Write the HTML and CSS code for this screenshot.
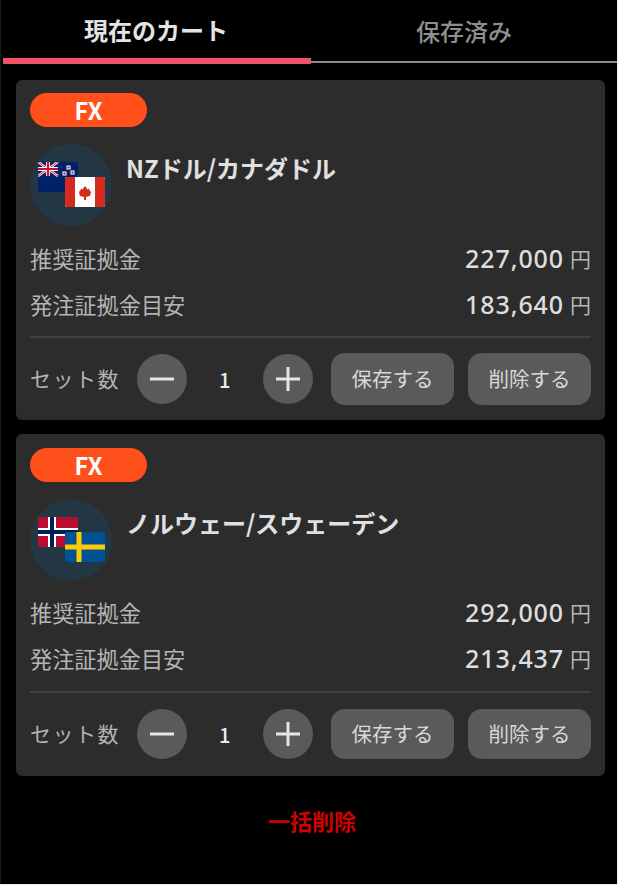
FILE: index.html
```html
<!DOCTYPE html>
<html lang="ja">
<head>
<meta charset="utf-8">
<title>カート</title>
<link rel="stylesheet" href="styles.css">
</head>
<body>
<div class="app">
  <nav class="tabs">
    <div class="tab tab-active">現在のカート</div>
    <div class="tab">保存済み</div>
  </nav>
  <main class="list">
    <section class="card">
      <div class="tag">FX</div>
      <div class="head">
        <div class="flags">
          <svg class="flag flag-a" viewBox="0 0 40 30">
            <rect width="40" height="30" rx="2" fill="#012169"/>
            <g stroke="#fff" stroke-width="2.6"><path d="M0 0 20 14M20 0 0 14"/></g>
            <g stroke="#c8102e" stroke-width="1"><path d="M0 0 20 14M20 0 0 14"/></g>
            <path d="M10 0V14M0 7H20" stroke="#fff" stroke-width="4"/>
            <path d="M10 0V14M0 7H20" stroke="#c8102e" stroke-width="2.2"/>
            <g fill="#c8102e" stroke="#fff" stroke-width="1"><rect x="29" y="4" width="3" height="3"/><rect x="25" y="10" width="3" height="3"/><rect x="33" y="9" width="3" height="3"/><rect x="29" y="20" width="3" height="3"/></g>
          </svg>
          <svg class="flag flag-b" viewBox="0 0 40 30">
            <rect width="40" height="30" rx="2" fill="#fff"/>
            <path d="M2 0H10V30H2A2 2 0 0 1 0 28V2A2 2 0 0 1 2 0ZM30 0H38A2 2 0 0 1 40 2V28A2 2 0 0 1 38 30H30Z" fill="#d52b1e"/>
            <path d="M20 9 23 13V11L26 15 25 19 21 20V23H19V20L15 19 14 15 17 11V13Z" fill="#d52b1e"/>
          </svg>
        </div>
        <h2 class="name">NZドル/カナダドル</h2>
      </div>
      <div class="row"><span class="label">推奨証拠金</span><span class="amount">227,000<span class="yen">円</span></span></div>
      <div class="row"><span class="label">発注証拠金目安</span><span class="amount">183,640<span class="yen">円</span></span></div>
      <div class="controls">
        <span class="label label-set">セット数</span>
        <button class="round" aria-label="減らす"><svg viewBox="0 0 26 26"><path d="M1 13H25" stroke="#e6e6e6" stroke-width="3"/></svg></button>
        <span class="count">1</span>
        <button class="round" aria-label="増やす"><svg viewBox="0 0 26 26"><path d="M1 13H25M13 1V25" stroke="#e6e6e6" stroke-width="3"/></svg></button>
        <button class="action action-save">保存する</button>
        <button class="action">削除する</button>
      </div>
    </section>
    <section class="card card-b">
      <div class="tag">FX</div>
      <div class="head">
        <div class="flags">
          <svg class="flag flag-a" viewBox="0 0 40 30">
            <rect width="40" height="30" rx="2" fill="#ba0c2f"/>
            <path d="M0 15H40M14 0V30" stroke="#fff" stroke-width="8"/>
            <path d="M0 15H40M14 0V30" stroke="#00205b" stroke-width="4"/>
          </svg>
          <svg class="flag flag-b" viewBox="0 0 40 30">
            <rect width="40" height="30" rx="2" fill="#005293"/>
            <path d="M0 15H40M14 0V30" stroke="#fecb00" stroke-width="5"/>
          </svg>
        </div>
        <h2 class="name">ノルウェー/スウェーデン</h2>
      </div>
      <div class="row"><span class="label">推奨証拠金</span><span class="amount">292,000<span class="yen">円</span></span></div>
      <div class="row"><span class="label">発注証拠金目安</span><span class="amount">213,437<span class="yen">円</span></span></div>
      <div class="controls">
        <span class="label label-set">セット数</span>
        <button class="round" aria-label="減らす"><svg viewBox="0 0 26 26"><path d="M1 13H25" stroke="#e6e6e6" stroke-width="3"/></svg></button>
        <span class="count">1</span>
        <button class="round" aria-label="増やす"><svg viewBox="0 0 26 26"><path d="M1 13H25M13 1V25" stroke="#e6e6e6" stroke-width="3"/></svg></button>
        <button class="action action-save">保存する</button>
        <button class="action">削除する</button>
      </div>
    </section>
  </main>
  <div class="bulk">一括削除</div>
</div>
</body>
</html>
```

FILE: styles.css
```css
* { box-sizing: border-box; }
html, body { margin: 0; height: 100%; background: #000; overflow: hidden; }
body {
  font-family: "Noto Sans CJK JP", "Noto Sans", sans-serif;
  color: #bdbdbd;
}
.app {
  height: 885px;
  width: 618px;
  padding: 0 1px 1px 3px;
  background: #000;
  display: flex;
  flex-direction: column;
  box-shadow: inset -1px -1px 0 #e8eaec, inset 1px 0 0 #1a1a1a;
}
.tabs { display: flex; height: 64px; align-items: flex-start; }
.tab {
  flex: 1 1 0;
  display: flex;
  align-items: center;
  justify-content: center;
  height: 63px;
  font-size: 24px;
  font-weight: 500;
  color: #8f8f8f;
  border-bottom: 2px solid #8a8a8a;
}
.tab-active {
  flex: 0 0 308px;
  height: 64px;
  padding: 0 2px 0 0;
  font-size: 24px;
  font-weight: 700;
  color: #e4e4e4;
  border-bottom: 6px solid #f0526a;
}
.list {
  display: flex;
  flex-direction: column;
  gap: 14px;
  padding: 16px 12px 0 13px;
}
.card {
  background: #2c2c2c;
  border-radius: 6px;
  padding: 13px 14px 0;
  height: 340px;
}
.card-b { height: 342px; padding-top: 14px; }
.tag {
  width: 117px;
  height: 34px;
  border-radius: 17px;
  background: #ff4f1a;
  color: #fff;
  font-weight: 700;
  font-size: 23.500px;
  line-height: 34px;
  text-align: center;
}
.head {
  display: flex;
  gap: 15px;
  margin-top: 17px;
  height: 82px;
}
.flags {
  position: relative;
  flex: 0 0 82px;
  height: 82px;
  border-radius: 50%;
  background: #233643;
}
.flag { position: absolute; display: block; width: 40px; height: 30px; filter: blur(0.4px); }
.flag-a { left: 8px; top: 18px; }
.flag-b { left: 35px; top: 33px; }
.name {
  margin: 7px 0 0 -1px;
  font-size: 24px;
  line-height: 34px;
  font-weight: 700;
  color: #e0e0e0;
}
.row {
  display: flex;
  justify-content: space-between;
  align-items: center;
  height: 46px;
}
.head + .row { margin-top: 9px; }
.card-b .head + .row { margin-top: 8px; }
.label { font-size: 22.200px; color: #b4b4b4; }
.amount {
  font-family: "Noto Sans", "Noto Sans CJK JP", sans-serif;
  font-size: 25px;
  letter-spacing: 0.900px;
  font-weight: 500;
  color: #dedede;
  display: flex;
  align-items: center;
}
.yen {
  font-family: "Noto Sans CJK JP", sans-serif;
  font-size: 21px;
  letter-spacing: 0;
  font-weight: 400;
  color: #b4b4b4;
  margin-left: 6px;
}
.controls {
  display: flex;
  align-items: center;
  border-top: 2px solid #414141;
  margin-top: 9px;
  padding-top: 15px;
  height: 69px;
}
.card-b .controls { margin-top: 10px; padding-top: 16px; height: 68px; }
.label-set { width: 107px; letter-spacing: 1.500px; white-space: nowrap; font-size: 21px; padding-bottom: 2px; }
button {
  font-family: inherit;
  border: 0;
  padding: 0;
  cursor: pointer;
}
.round {
  width: 49.500px;
  height: 50px;
  border-radius: 50%;
  background: #5a5a5a;
  display: flex;
  align-items: center;
  justify-content: center;
}
.round svg { width: 26px; height: 26px; display: block; }
.count {
  width: 76.500px;
  text-align: center;
  font-size: 20px;
  font-weight: 500;
  color: #ececec;
  padding-top: 1px;
}
.action {
  width: 123px;
  height: 100%;
  border-radius: 14px;
  background: #5a5a5a;
  color: #d8d8d8;
  font-size: 20.500px;
  margin-left: 14px;
  padding-bottom: 2px;
}
.action-save { margin-left: 18.500px; }
.bulk {
  margin-top: 29px;
  text-align: center;
  font-size: 22px;
  font-weight: 700;
  color: #d00000;
  line-height: 30px;
  padding-left: 4px;
}
```
